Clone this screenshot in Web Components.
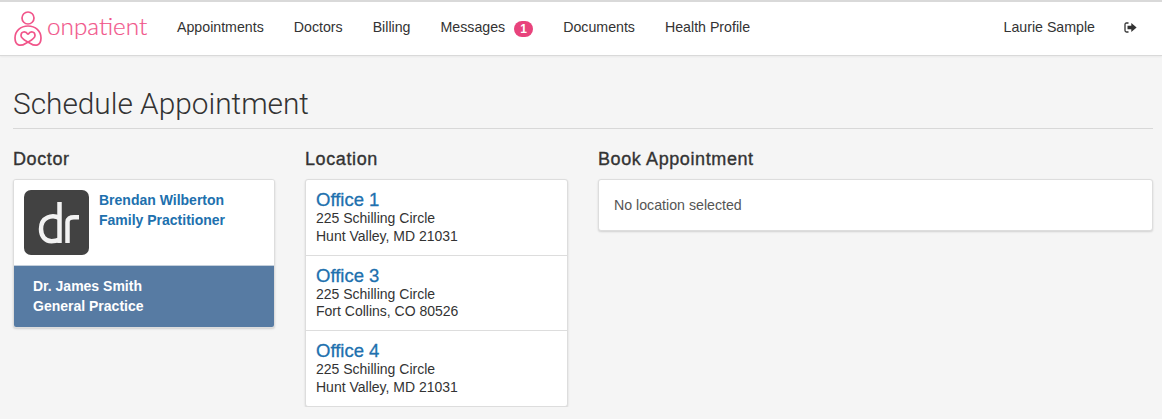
<!DOCTYPE html>
<html>
<head>
<meta charset="utf-8">
<style>
html, body { margin: 0; padding: 0; background: #f5f5f5; }
body { font-family: "Liberation Sans", Arial, sans-serif; font-size: 14px; color: #333; }
</style>
</head>
<body>
<op-navbar>
  <op-nav-link>Appointments</op-nav-link>
  <op-nav-link>Doctors</op-nav-link>
  <op-nav-link>Billing</op-nav-link>
  <op-nav-link badge="1">Messages</op-nav-link>
  <op-nav-link>Documents</op-nav-link>
  <op-nav-link>Health Profile</op-nav-link>
  <op-nav-link slot="right">Laurie Sample</op-nav-link>
  <op-logout slot="right"></op-logout>
</op-navbar>
<op-page heading="Schedule Appointment">
  <op-column heading="Doctor" style="width:262px">
    <op-panel>
      <op-doctor name="Brendan Wilberton" title="Family Practitioner" logo></op-doctor>
      <op-doctor name="Dr. James Smith" title="General Practice" active></op-doctor>
    </op-panel>
  </op-column>
  <op-column heading="Location" style="width:263px">
    <op-panel>
      <op-office name="Office 1" street="225 Schilling Circle" city="Hunt Valley, MD 21031"></op-office>
      <op-office name="Office 3" street="225 Schilling Circle" city="Fort Collins, CO 80526"></op-office>
      <op-office name="Office 4" street="225 Schilling Circle" city="Hunt Valley, MD 21031"></op-office>
    </op-panel>
  </op-column>
  <op-column heading="Book Appointment" style="flex:1">
    <op-panel>
      <op-empty>No location selected</op-empty>
    </op-panel>
  </op-column>
</op-page>
<script>
class OpNavbar extends HTMLElement {
    constructor() {
        super();
        this.attachShadow({ mode: 'open' }).innerHTML = `
        <style>
        :host {
            display: flex;
            align-items: center;
            height: 53px;
            background: #fff;
            border-top: 2px solid #d9d9d9;
            border-bottom: 1px solid #d9d9d9;
            box-shadow: 0 1px 2px rgba(0,0,0,.05);
            padding: 0 9px 0 13px;
        }
        .brand { display: flex; align-items: center; width: 149px; color: #f1558a; }
        .brand svg { display: block; flex: none; }
        .brand span {
            font: 300 24.300px/1 Lato, sans-serif;
            margin-left: 3px;
            margin-top: -5px;
            -webkit-text-stroke: .2px #f1558a;
        }
        nav { display: flex; align-items: center; }
        .right { margin-left: auto; display: flex; align-items: center; }
        </style>
        <div class="brand">
            <svg width="31" height="40" viewBox="12.500 8 31 40" fill="none" stroke="#f1558a" stroke-width="1.700">
                <circle cx="27.500" cy="17" r="6"/>
                <path d="M27.500 33.500C25 29.500 20.500 30.500 20.500 34.500C20.500 38 25 39.500 30 42.500C33 44.500 40.500 46.500 40.500 37C40.500 30 35 25 27.500 25"/>
                <path d="M27.500 33.500C30 29.500 34.500 30.500 34.500 34.500C34.500 38 30 39.500 25 42.500C22 44.500 14.500 46.500 14.500 37C14.500 30 20 25 27.500 25"/>
            </svg>
            <span>onpatient</span>
        </div>
        <nav><slot></slot></nav>
        <div class="right"><slot name="right"></slot></div>
        `;
    }
}
customElements.define('op-navbar', OpNavbar);

class OpNavLink extends HTMLElement {
    constructor() {
        super();
        const badge = this.getAttribute('badge');
        this.attachShadow({ mode: 'open' }).innerHTML = `
        <style>
        :host {
            display: flex;
            align-items: center;
            padding: 0 15px 3px;
            font-size: 14.2px;
            color: #333;
            line-height: 20px;
        }
        .badge {
            margin: 3px 0 0 9px;
            background: #e8437c;
            color: #fff;
            font-size: 12px;
            font-weight: bold;
            line-height: 1;
            min-width: 7px;
            padding: 2px 6px;
            border-radius: 10px;
            text-align: center;
        }
        </style>
        <slot></slot>${badge ? `<span class="badge">${badge}</span>` : ''}
        `;
    }
}
customElements.define('op-nav-link', OpNavLink);

class OpLogout extends HTMLElement {
    constructor() {
        super();
        this.attachShadow({ mode: 'open' }).innerHTML = `
        <style>
        :host { display: flex; align-items: center; padding: 0 16px 3px 14px; }
        svg { display: block; }
        </style>
        <svg width="13" height="11" viewBox="0 0 13 11">
            <path d="M4.500 1H2.500C1.500 1 1 1.600 1 2.500V8.500C1 9.400 1.500 10 2.500 10H4.500" fill="none" stroke="#333" stroke-width="1.300"/>
            <path d="M3.500 3.700H7.300V.9L12.600 5.500L7.300 10.100V7.300H3.500Z" fill="#333"/>
        </svg>
        `;
    }
}
customElements.define('op-logout', OpLogout);

class OpPage extends HTMLElement {
    constructor() {
        super();
        this.attachShadow({ mode: 'open' }).innerHTML = `
        <style>
        :host { display: block; padding: 0 9px 0 13px; }
        h1 {
            margin: 30px 0 0;
            padding-bottom: 6px;
            border-bottom: 1px solid #d8d8d8;
            font: 300 29.800px/36px Roboto, sans-serif;
            color: #333;
            height: 36px;
        }
        .cols { display: flex; gap: 30px; margin-top: 20px; align-items: flex-start; }
        </style>
        <h1>${this.getAttribute('heading')}</h1>
        <div class="cols"><slot></slot></div>
        `;
    }
}
customElements.define('op-page', OpPage);

class OpColumn extends HTMLElement {
    constructor() {
        super();
        this.attachShadow({ mode: 'open' }).innerHTML = `
        <style>
        :host { display: block; }
        h2 { margin: 0 0 10px; font-size: 18px; font-weight: 500; line-height: 20px; color: #333; letter-spacing: .6px; -webkit-text-stroke: .35px #333; }
        </style>
        <h2>${this.getAttribute('heading')}</h2>
        <slot></slot>
        `;
    }
}
customElements.define('op-column', OpColumn);

class OpPanel extends HTMLElement {
    constructor() {
        super();
        this.attachShadow({ mode: 'open' }).innerHTML = `
        <style>
        :host {
            display: block;
            background: #fff;
            border: 1px solid #ddd;
            border-radius: 3px;
            overflow: hidden;
            box-shadow: 0 1px 2px rgba(0,0,0,.15);
        }
        </style>
        <slot></slot>
        `;
    }
}
customElements.define('op-panel', OpPanel);

class OpDoctor extends HTMLElement {
    constructor() {
        super();
        const logo = this.hasAttribute('logo');
        const active = this.hasAttribute('active');
        this.attachShadow({ mode: 'open' }).innerHTML = `
        <style>
        :host { display: flex; gap: 10px; padding: ${active ? '10px 19px 11px' : '10px'}; background: ${active ? '#577ba3' : '#fff'}; ${active ? 'border-top: 1px solid #c4cfdb;' : ''} }
        .logo { width: 65px; height: 65px; border-radius: 7px; background: #424242; display: flex; align-items: center; justify-content: center; }
        .logo svg { display: block; }
        .txt { font-size: 14px; font-weight: bold; line-height: 20px; color: ${active ? '#fff' : '#2070ae'}; }
        </style>
        ${logo ? `<div class="logo"><svg width="46" height="42" viewBox="0 0 46 42" fill="none" stroke="#f2f2f2" stroke-width="4.500">
            <path d="M25.500 0V41"/>
            <path d="M25.500 16C22 14 17 13.800 13.500 15.500C9 17.500 7 22 7 27C7 34 11 39.200 17.500 39.200C20.500 39.200 23 38.700 25.500 37.700"/>
            <path d="M33.500 41V20C33.500 16.500 36 15.200 40 15.200H45"/>
        </svg></div>` : ''}
        <div class="txt"><div>${this.getAttribute('name')}</div><div>${this.getAttribute('title')}</div></div>
        `;
    }
}
customElements.define('op-doctor', OpDoctor);

class OpOffice extends HTMLElement {
    constructor() {
        super();
        this.attachShadow({ mode: 'open' }).innerHTML = `
        <style>
        :host { display: block; padding: 10px 10px 9.500px; border-bottom: 1px solid #ddd; }
        :host(:last-child) { border-bottom: 0; }
        .name { font-size: 18.500px; line-height: 20px; color: #2070ae; -webkit-text-stroke: .3px #2070ae; }
        .addr { font-size: 14px; line-height: 17.500px; color: #333; }
        </style>
        <div class="name">${this.getAttribute('name')}</div>
        <div class="addr">${this.getAttribute('street')}<br>${this.getAttribute('city')}</div>
        `;
    }
}
customElements.define('op-office', OpOffice);

class OpEmpty extends HTMLElement {
    constructor() {
        super();
        this.attachShadow({ mode: 'open' }).innerHTML = `
        <style>
        :host { display: block; padding: 15px; font-size: 14.200px; line-height: 20px; color: #555; }
        </style>
        <slot></slot>
        `;
    }
}
customElements.define('op-empty', OpEmpty);
</script>
</body>
</html>
